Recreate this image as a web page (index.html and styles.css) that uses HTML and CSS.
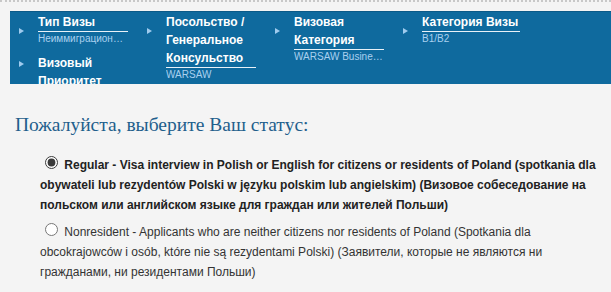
FILE: index.html
```html
<!DOCTYPE html>
<html lang="ru">
<head>
    <meta charset="UTF-8">
    <meta name="viewport" content="width=device-width, initial-scale=1.0">
    <title>Визовый статус</title>
    <link rel="stylesheet" href="styles.css">
</head>
<body>
    <div class="page">
        <div class="steps">
            <div class="step">
                <div class="step-body">
                    <div class="step-title">Тип Визы</div>
                    <div class="step-value">Неиммиграционная виза</div>
                </div>
            </div>
            <div class="step step-tall">
                <div class="step-body">
                    <div class="step-title">Посольство / Генеральное Консульство</div>
                    <div class="step-value">WARSAW</div>
                </div>
            </div>
            <div class="step step-tall">
                <div class="step-body">
                    <div class="step-title">Визовая Категория</div>
                    <div class="step-value">WARSAW Business Travel</div>
                </div>
            </div>
            <div class="step step-tall">
                <div class="step-body step-wide">
                    <div class="step-title">Категория Визы</div>
                    <div class="step-value">B1/B2</div>
                </div>
            </div>
            <div class="step step-low">
                <div class="step-body">
                    <div class="step-title">Визовый Приоритет</div>
                    <div class="step-value">Обычный</div>
                </div>
            </div>
        </div>

        <h2 class="status-title">Пожалуйста, выберите Ваш статус:</h2>

        <div class="status-options">
            <label class="status-option selected"><input type="radio" name="status" checked> Regular - Visa interview in Polish or English for citizens or residents of Poland (spotkania dla obywateli lub rezydentów Polski w języku polskim lub angielskim) (Визовое собеседование на польском или английском языке для граждан или жителей Польши)</label>
            <label class="status-option"><input type="radio" name="status"> Nonresident - Applicants who are neither citizens nor residents of Poland (Spotkania dla obcokrajowców i osób, które nie są rezydentami Polski) (Заявители, которые не являются ни гражданами, ни резидентами Польши)</label>
        </div>
    </div>
</body>
</html>
```

FILE: styles.css
```css
body {
    margin: 0;
    padding: 0;
    font-family: "Liberation Sans", Arial, sans-serif;
    color: #333;
    background-color: #f4f4f4;
}
.page {
    border-top: 2px dotted #c8c8c8;
    padding-top: 9px;
}
.steps {
    display: grid;
    grid-template-columns: repeat(4, 128px);
    row-gap: 8px;
    align-items: start;
    margin-left: 10px;
    height: 71px;
    overflow: hidden;
    padding-top: 1px;
    background: #0f6a9e;
    border-top: 1px solid #0b5a88;
}
.step {
    display: flex;
}
.step-tall {
    grid-row: span 2;
}
.step::before {
    content: "";
    flex: none;
    width: 0;
    height: 0;
    margin: 15px 14px 0 9px;
    border-left: 5px solid #9fcbee;
    border-top: 3.5px solid transparent;
    border-bottom: 3.5px solid transparent;
}
.step-low::before {
    margin-top: 7px;
}
.step-body {
    width: 90px;
}
.step-wide {
    width: 98px;
}
.step-title {
    font-size: 12px;
    line-height: 18px;
    font-weight: bold;
    color: #fff;
    border-bottom: 1px solid #e8f1f8;
}
.step-value {
    font-size: 10px;
    line-height: 14px;
    color: #a9d0ef;
    white-space: nowrap;
    overflow: hidden;
    text-overflow: ellipsis;
}
.status-title {
    margin: 29px 0 16px 15px;
    font-family: "Liberation Serif", "Times New Roman", serif;
    font-size: 19.5px;
    line-height: 24px;
    font-weight: normal;
    color: #1f5f8c;
}
.status-option {
    display: block;
    width: 561px;
    margin: 0 0 5px 40px;
    font-size: 12px;
    line-height: 20px;
    color: #333;
}
.status-option input {
    accent-color: #3a3a3a;
}
.status-option.selected {
    font-weight: bold;
    color: #222;
}
```
